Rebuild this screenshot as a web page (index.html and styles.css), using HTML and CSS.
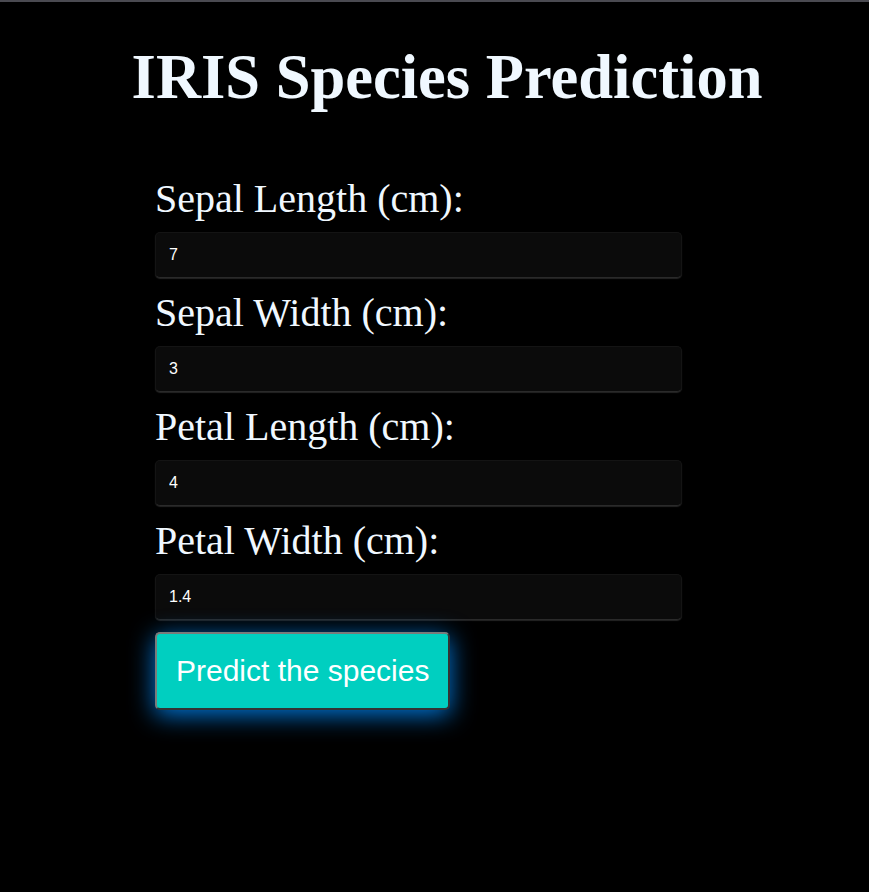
FILE: index.html
```html
<!DOCTYPE html>
<html lang="en">
<head>
<meta charset="utf-8">
<title>IRIS Species Prediction</title>
<link rel="stylesheet" href="styles.css">
</head>
<body>
<div class="topline"></div>
<h1 class="title">IRIS Species Prediction</h1>
<form class="form">
  <label class="label" for="sl">Sepal Length (cm):</label>
  <input class="field" id="sl" type="text" value="7">
  <label class="label" for="sw">Sepal Width (cm):</label>
  <input class="field" id="sw" type="text" value="3">
  <label class="label" for="pl">Petal Length (cm):</label>
  <input class="field" id="pl" type="text" value="4">
  <label class="label" for="pw">Petal Width (cm):</label>
  <input class="field" id="pw" type="text" value="1.4">
  <button class="btn" type="button">Predict the species</button>
</form>
</body>
</html>
```
FILE: styles.css
```css
html, body {
  margin: 0;
  padding: 0;
  background: #000;
}
body {
  font-family: "Liberation Serif", "Times New Roman", serif;
  color: #f0f8ff;
  min-height: 892px;
}
.topline {
  height: 2px;
  background: #4a4a51;
}
.title {
  margin: 0;
  padding: 38px 0 0 25px;
  text-align: center;
  font-size: 62.5px;
  font-weight: bold;
  line-height: 74px;
  color: #f0f8ff;
}
.form {
  display: flex;
  flex-direction: column;
  align-items: flex-start;
  width: 527px;
  margin: 62px 0 0 155px;
}
.label {
  font-size: 40px;
  line-height: 46px;
  margin-bottom: 10px;
  color: #f0f8ff;
}
.field {
  box-sizing: border-box;
  width: 527px;
  height: 46px;
  margin: 0 0 12px 0;
  padding: 0 13px;
  background: #0b0b0b;
  border: 1px solid #141414;
  border-bottom-color: #2a2a2a;
  border-radius: 5px;
  box-shadow: 0 1px 1px rgba(60, 60, 60, 0.6);
  color: #fff;
  font-family: "Liberation Sans", Arial, sans-serif;
  font-size: 16px;
  outline: none;
}
.btn {
  margin: 0;
  padding: 20px 19px;
  background: #00cfc0;
  border: 2px solid;
  border-color: #7a7a7a #333 #333 #7a7a7a;
  border-radius: 5px;
  box-shadow: 0 5px 24px rgba(0, 140, 255, 0.85);
  color: #fff;
  font-family: "Liberation Sans", Arial, sans-serif;
  font-size: 30px;
  line-height: 34px;
  cursor: pointer;
}
```
